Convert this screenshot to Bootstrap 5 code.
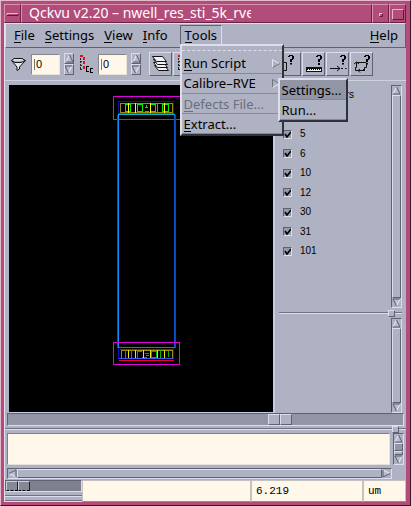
<!DOCTYPE html>
<html lang="en">
<head>
<meta charset="utf-8">
<meta name="viewport" content="width=device-width, initial-scale=1">
<title>Qckvu v2.20</title>
<link href="https://cdn.jsdelivr.net/npm/bootstrap@5.3.0/dist/css/bootstrap.min.css" rel="stylesheet">
<style>
:root{--face:#aeb2c3;--hi:#dcdeef;--lo:#5f6270;--trough:#9195a4;--pink:#b24d7a;--cream:#fff7e9}
body{font:13px/18px "Noto Sans","Open Sans",sans-serif;color:#000;background:var(--face)}
button,input,textarea{font:inherit;color:inherit;border-radius:0;padding:0;margin:0;display:block}
button{background:var(--face)}
.win{min-height:100vh;background:var(--pink);border:1px solid #e3b9cc;border-right-color:#3d1428;border-bottom-color:#3d1428;padding:3px 4px 3px 3px}
.raised{border:1px solid;border-color:var(--hi) var(--lo) var(--lo) var(--hi)}
.sunk{border:1px solid;border-color:var(--lo) var(--hi) var(--hi) var(--lo)}
.title{height:19px;color:#fff}
.title button,.title-text{background:var(--pink);border:1px solid;border-color:#d893b2 #6b2144 #6b2144 #d893b2;height:19px}
.title button{width:17px}
.title-text{font-size:14px;line-height:16px;padding-left:7px;min-width:0;overflow:hidden;white-space:nowrap}
.title-clip{width:222px;overflow:hidden}
.body-pane{background:var(--face);border-left:1px solid #e0e2f0}
.menubar{height:25px;padding:1px 2px 1px 3px}
.menubar button{height:20px;border:0;padding:0 5px}
.menubar u{display:inline-block;text-decoration:none;height:17px;line-height:18px;border-bottom:1px solid currentColor;vertical-align:top}
.menubar .tools{border:1px solid;border-color:var(--lo) var(--hi) var(--face) var(--lo);padding:0 4px}
.tools-entry{margin-left:7px}
.pop{position:absolute;background:var(--face);border:2px solid;border-color:var(--hi) #30323a #30323a var(--hi);z-index:5}
.menubar .pop button{background:var(--face);border-bottom:1px solid #858897;width:100%;height:20px;text-align:left;padding:0 0 0 2px;white-space:nowrap}
.pop button:disabled{color:#6c6f7e}
.pop-main{top:19px;left:0;width:104px;padding-top:4px}
.pop-main>.tear{border-top:1px dashed var(--hi);height:4px}
.pop-sub{top:32px;left:96px;width:70px}
.menubar .pop .active-item{background:var(--trough)}
.toolbar{height:33px;padding:0 5px;border-bottom:1px solid #cfd1df}
.spin-field{width:29px;height:21px;background:linear-gradient(#777,#777) 2px 4px/1px 11px no-repeat var(--cream);border:1px solid;border-color:#85858c #e8e4dc #e8e4dc #85858c;padding-left:4px;font:11px/18px "Liberation Sans",sans-serif}
.spin button{width:10px;height:11px}
.tool{width:23px;height:24px}
.tool-group{gap:1px}
.tools-gap{width:82px}
.canvas-box{width:266px;border-right:2px solid #c9cbe6;border-bottom:1px solid #c9cbe6;background:#000;min-height:326px}
.canvas-box svg{display:block;width:100%;height:100%}
.layer-names{font:10px/12px "Liberation Sans",sans-serif}
.layer-title{padding:4px 0 0 41px;margin-bottom:23px}
.layers{height:133px}
.layers input{appearance:none;width:9px;height:9px;background:#969aa9 url("data:image/svg+xml,%3Csvg xmlns='http://www.w3.org/2000/svg' viewBox='0 0 7 7'%3E%3Cpath d='M1 3l2 3 4-5' fill='none' stroke='%23000' stroke-width='1.6'/%3E%3C/svg%3E") center/7px 7px no-repeat}
.layers label{gap:8px}
.bar{background:var(--face)}
.bar button{background:none;border:0;width:9px;height:9px;flex:none}
.vbar{width:11px}
.hbar{height:11px}
.bar svg,.tool svg,.spin svg,.title svg{display:block}
.groove{height:2px;border-top:1px solid #70737f;border-bottom:1px solid var(--hi)}
.sash{position:absolute;right:7px;top:-3px;width:7px;height:7px;background:var(--face)}
.lower-pane{height:95px}
.scroll-line{padding:0 2px}
.scroller{height:13px;background:var(--trough);padding-left:260px}
.thumb{width:12px;background:var(--face)}
.log-groove{margin:2px 0 3px}
.log-area{padding:0 2px 1px}
.log{height:32px;background:var(--cream);resize:none;border-color:#7d7f88 #e6e2da #e6e2da #7d7f88;overflow:hidden}
.log-v{margin-left:3px}
.log-h{margin:3px 12px 0 0}
.dark-thumb{background:var(--trough)}
.nub{height:4px}
.status{height:22px}
.status input{background:var(--cream);font:11px/18px "Liberation Mono",monospace;border-color:#c4c2c0 #c4c2c0 #8a8c99 #c4c2c0;min-width:0;padding-left:4px}
.gauge{width:77px;gap:3px}
.gauge-track{height:12px;background:#7d808d}
.gauge-track span{width:12px;height:10px;background:#858895;border:1px solid #ccced8;border-right-color:#222;border-bottom:1px dashed #000}
.s-mid{width:112px}
.s-unit{width:43px}
</style>
<script src="https://cdn.jsdelivr.net/npm/bootstrap@5.3.0/dist/js/bootstrap.bundle.min.js"></script>
</head>
<body>
<svg width="0" height="0" class="position-absolute" aria-hidden="true">
<defs>
<g id="up"><path d="M4.500 1L8 8H1z" fill="#b9bccb"/><path d="M4.500 1L1 8" stroke="#eceefa" fill="none"/><path d="M4.500 1L8 8H1" stroke="#5a5d6a" fill="none"/></g>
<g id="tree" shape-rendering="crispEdges"><path d="M1.500 0V15M1 1.500H4M1 6.500H4M1 10.500H4M1 14.500H4" stroke="#222" stroke-dasharray="2 1" fill="none"/><path d="M7.500 11V17M7 11.500h3M7 16.500h3M11 13.500h3M11 17.500h3M11.500 13v5" stroke="#000" fill="none"/><path d="M1 0h3v2H1zM4 2h2v3H4zM4 6h2v3H4zM4 11h2v3H4z" fill="#e01020"/></g>
<path id="sheet" d="M2.500 .5H12.500L16.500 5.500H6.500z" fill="#f2f2f6" stroke="#111"/>
<path id="q" d="M0 2V1H1V0H5V1H6V4H5V5H4V7H2V4H4V1H2V2zM2 8H4V9.500H2z" fill="#000"/>
</defs>
</svg>
<div class="win d-flex flex-column">
  <header class="title d-flex">
    <button type="button" aria-label="Window menu"><svg width="15" height="16"><path d="M2 9.500V7.500H13" stroke="#e8b6cc" fill="none"/><path d="M2 9.500H13V8" stroke="#5a1a38" fill="none"/></svg></button>
    <div class="title-text flex-grow-1"><div class="title-clip">Qckvu v2.20 – nwell_res_sti_5k_rve</div></div>
    <button type="button" aria-label="Minimize"><svg width="15" height="16"><path d="M6.500 10V7.500H9" stroke="#f3cbdc" fill="none"/><path d="M7 10.500H9.500V8" stroke="#5a1a38" fill="none"/></svg></button>
    <button type="button" aria-label="Maximize"><svg width="15" height="16"><path d="M2.500 13V3.500H13" stroke="#e8b6cc" fill="none"/><path d="M3 13.500H13.500V4" stroke="#5a1a38" fill="none"/></svg></button>
  </header>
  <div class="body-pane flex-grow-1 d-flex flex-column">
    <nav class="menubar raised d-flex align-items-start" aria-label="Main">
      <button type="button"><u>F</u>ile</button>
      <button type="button"><u>S</u>ettings</button>
      <button type="button"><u>V</u>iew</button>
      <button type="button"><u>I</u>nfo</button>
      <div class="position-relative tools-entry">
        <button type="button" class="tools"><u>T</u>ools</button>
        <div class="pop pop-main">
          <div class="tear"></div>
          <button type="button" class="d-flex justify-content-between"><span><u>R</u>un Script</span><svg width="13" height="18"><path d="M3.500 13.500V5.500L10 9.500" stroke="#e6e8f5" fill="none"/><path d="M3.500 13.500L11 9.500" stroke="#70737f" fill="none"/></svg></button>
          <button type="button" class="d-flex justify-content-between"><span>Calibre–RVE</span><svg width="13" height="18"><path d="M3.500 13.500V5.500L10 9.500" stroke="#70737f" fill="none"/><path d="M3.500 13.500L11 9.500" stroke="#e6e8f5" fill="none"/></svg></button>
          <button type="button" disabled><u>D</u>efects File...</button>
          <button type="button"><u>E</u>xtract...</button>
          <div class="pop pop-sub">
            <button type="button" class="active-item">Settings...</button>
            <button type="button">Run...</button>
          </div>
        </div>
      </div>
      <button type="button" class="ms-auto"><u>H</u>elp</button>
    </nav>

    <div class="toolbar d-flex align-items-center">
      <svg width="17" height="18"><path d="M1.500 5.500L4 3.500H12L15.500 5.500L11 7.500H5zM1.500 5.500L7 12V15.500L9.500 14V12L15.500 5.500" fill="#e5e6ee" stroke="#111"/></svg>
      <input class="spin-field ms-1" value="0" aria-label="Filter depth">
      <div class="spin ms-1"><button type="button" class="raised" aria-label="Raise filter"><svg width="8" height="9"><use href="#up"/></svg></button><button type="button" class="raised" aria-label="Lower filter"><svg width="8" height="9"><use href="#up" transform="rotate(180 4 4.500)"/></svg></button></div>
      <svg class="ms-1" width="16" height="20"><use href="#tree" x="1" y="1"/></svg>
      <input class="spin-field ms-1" value="0" aria-label="Hierarchy depth">
      <div class="spin ms-1"><button type="button" class="raised" aria-label="Raise depth"><svg width="8" height="9"><use href="#up"/></svg></button><button type="button" class="raised" aria-label="Lower depth"><svg width="8" height="9"><use href="#up" transform="rotate(180 4 4.500)"/></svg></button></div>
      <div class="d-flex ms-2 tool-group">
        <button type="button" class="tool raised" aria-label="Layers"><svg width="21" height="22"><use href="#sheet" x="2" y="12"/><use href="#sheet" x="1" y="9"/><use href="#sheet" x="1" y="6"/><use href="#sheet" y="3"/></svg></button>
        <button type="button" class="tool raised" aria-label="Hierarchy"><svg width="21" height="22"><use href="#tree" x="3" y="2"/></svg></button>
      </div>
      <div class="tools-gap"></div>
      <div class="d-flex tool-group">
        <button type="button" class="tool raised" aria-label="Query cell"><svg width="21" height="22"><path d="M1.500 9.500H7.500V17.500H1.500z" fill="none" stroke="#111"/><use href="#q" x="9" y="2"/></svg></button>
        <button type="button" class="tool raised" aria-label="Query ruler"><svg width="21" height="22" shape-rendering="crispEdges"><path d="M3 14h16v5H3z" fill="#111"/><path d="M4 17h14" stroke="#f4f4ee" stroke-width="2"/><path d="M4 16.500h14" stroke="#111" stroke-dasharray="1 1"/><use href="#q" x="13" y="2"/></svg></button>
        <button type="button" class="tool raised" aria-label="Query edge"><svg width="21" height="22"><path d="M3 15.500H13M10 13l3 2.500-3 2.500M14 15.500h2M18 15.500h1.500" stroke="#111" fill="none"/><use href="#q" x="13" y="2"/></svg></button>
        <button type="button" class="tool raised" aria-label="Query shape"><svg width="21" height="22"><path d="M5.500 9.500H15.500M15.500 10V14.500H13.500V17.500H4.500V14.500H5.500V9.500M3 11l2.500-2 2.500 2M12 16l2 2M9 16l-2 1.500 2 2" stroke="#111" fill="none"/><use href="#q" x="13" y="2"/></svg></button>
      </div>
    </div>

    <main class="d-flex flex-grow-1 pt-1 ps-1 pe-1">
      <div class="canvas-box flex-shrink-0">
        <svg viewBox="0 0 264 326" preserveAspectRatio="xMidYMin meet" role="img" aria-label="Cell layout">
          <g fill="none" shape-rendering="crispEdges">
            <path d="M104.500 11.500H171.500V34.500H104.500z" stroke="#e000e0"/>
            <path d="M109.500 29V16.500H164.500V29" stroke="#1010a8"/>
            <path d="M111.500 18.500H163.500V27.500H111.500z" stroke="#a08a10"/>
            <path d="M110 28.500H165" stroke="#a03818"/>
            <path d="M116.500 19.500h5v7h-5zM128.500 19.500h5v7h-5zM141.500 19.500h5v7h-5zM153.500 19.500h6v7h-6z" stroke="#00f000"/>
            <path d="M119.500 18v10M126.500 18v10M141.500 18v10M155.500 18v10" stroke="#ffff00"/>
            <path d="M137.500 20v2M136 22.500h3" stroke="#30d010"/>
            <path d="M148.500 19v8M135.500 26.500h4" stroke="#70a010"/>
            <path d="M165.500 29.500V263" stroke="#1050c8"/>
            <path d="M109.500 29.500V263" stroke="#1090ff"/>
            <path d="M166.500 29.500V263M108.500 29.500V263" stroke="#006060"/>
            <path d="M109 29.500H166" stroke="#00b8d0"/>
            <path d="M104.500 257.500H170.500V279.500H104.500z" stroke="#e000e0"/>
            <path d="M109 262.500H166" stroke="#208090"/>
            <path d="M111 264H164" stroke="#802050"/>
            <path d="M109.500 263V274M164.500 263V274" stroke="#1010c8"/>
            <path d="M112.500 265.500H163.500V273.500H112.500z" stroke="#a08a10"/>
            <path d="M116.500 265v8M122.500 265v8M128.500 266.500h4M128.500 265v8M132.500 272.500h5M135.500 268.500h4M136.500 270.500h3M142.500 266.500h5v6h-5zM151.500 265v8M159.500 266v6" stroke="#00b000"/>
            <path d="M119.500 265v9M126.500 265v9M134.500 265v9M141.500 265v9M148.500 265v9M155.500 265v9" stroke="#e8e800"/>
            <path d="M110 273.500H164" stroke="#4050ff"/>
            <path d="M110 275.500H165" stroke="#f00020"/>
          </g>
        </svg>
      </div>
      <div class="flex-grow-1 d-flex flex-column ps-1">
        <section class="d-flex flex-grow-1">
          <div class="layer-names flex-grow-1 ps-1">
            <div class="layer-title">Layers</div>
            <div class="layers d-flex flex-column justify-content-between pt-1">
              <label class="d-flex align-items-center"><input type="checkbox" class="sunk" checked>5</label>
              <label class="d-flex align-items-center"><input type="checkbox" class="sunk" checked>6</label>
              <label class="d-flex align-items-center"><input type="checkbox" class="sunk" checked>10</label>
              <label class="d-flex align-items-center"><input type="checkbox" class="sunk" checked>12</label>
              <label class="d-flex align-items-center"><input type="checkbox" class="sunk" checked>30</label>
              <label class="d-flex align-items-center"><input type="checkbox" class="sunk" checked>31</label>
              <label class="d-flex align-items-center"><input type="checkbox" class="sunk" checked>101</label>
            </div>
          </div>
          <div class="bar vbar sunk d-flex flex-column justify-content-between"><button type="button" aria-label="Scroll up"><svg width="9" height="9"><use href="#up"/></svg></button><span class="raised flex-grow-1"></span><button type="button" aria-label="Scroll down"><svg width="9" height="9"><use href="#up" transform="rotate(180 4.500 4.500)"/></svg></button></div>
        </section>
        <div class="groove position-relative my-1"><span class="sash raised"></span></div>
        <section class="d-flex justify-content-end lower-pane">
          <div class="bar vbar sunk d-flex flex-column justify-content-between"><button type="button" aria-label="Scroll up"><svg width="9" height="9"><use href="#up"/></svg></button><span class="raised flex-grow-1"></span><button type="button" aria-label="Scroll down"><svg width="9" height="9"><use href="#up" transform="rotate(180 4.500 4.500)"/></svg></button></div>
        </section>
      </div>
    </main>

    <div class="scroll-line">
      <div class="scroller sunk d-flex"><span class="thumb raised"></span><span class="thumb raised"></span></div>
    </div>
    <div class="groove position-relative log-groove"><span class="sash raised"></span></div>
    <div class="log-area d-flex flex-column">
      <div class="d-flex">
        <textarea class="log sunk flex-grow-1" aria-label="Messages"></textarea>
        <div class="bar vbar sunk log-v d-flex flex-column justify-content-between"><button type="button" aria-label="Scroll up"><svg width="9" height="9"><use href="#up"/></svg></button><span class="raised flex-grow-1 dark-thumb"></span><span class="raised nub"></span><button type="button" aria-label="Scroll down"><svg width="9" height="9"><use href="#up" transform="rotate(180 4.500 4.500)"/></svg></button></div>
      </div>
      <div class="bar hbar sunk d-flex log-h"><button type="button" aria-label="Scroll left"><svg width="9" height="9"><use href="#up" transform="rotate(-90 4.500 4.500)"/></svg></button><span class="raised flex-grow-1"></span><button type="button" aria-label="Scroll right"><svg width="9" height="9"><use href="#up" transform="rotate(90 4.500 4.500)"/></svg></button></div>
    </div>
    <footer class="status d-flex">
      <div class="gauge d-flex flex-column"><div class="gauge-track sunk d-flex"><span></span><span></span></div><div class="groove"></div><div class="groove"></div></div>
      <input class="sunk flex-grow-1" aria-label="Status" readonly>
      <input class="sunk s-mid" value="6.219" aria-label="Value">
      <input class="sunk s-unit" value="um" aria-label="Unit">
    </footer>
  </div>
</div>
</body>
</html>
